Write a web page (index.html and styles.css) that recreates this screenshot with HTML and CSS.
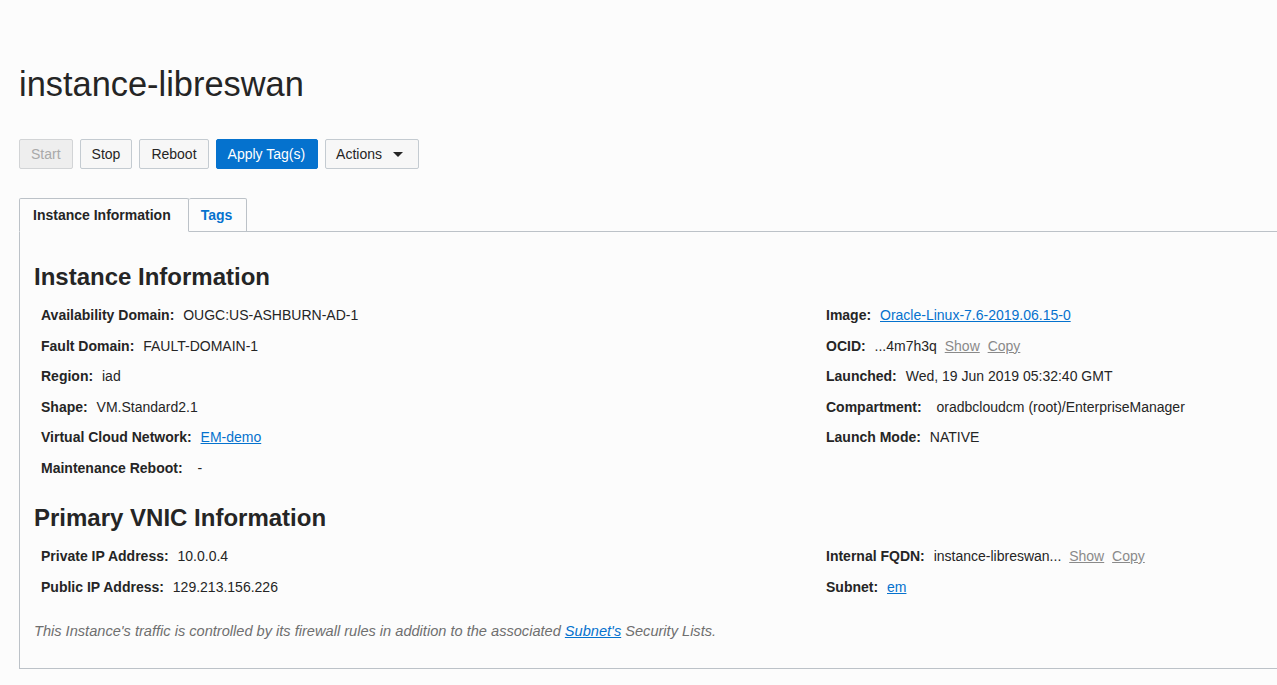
FILE: index.html
```html
<!DOCTYPE html>
<html lang="en">
<head>
  <meta charset="UTF-8">
  <meta name="viewport" content="width=device-width, initial-scale=1.0">
  <title>instance-libreswan</title>
  <link rel="stylesheet" href="styles.css">
</head>
<body>
  <div class="page">
    <h1>instance-libreswan</h1>

    <div class="toolbar">
      <button class="btn" disabled>Start</button>
      <button class="btn">Stop</button>
      <button class="btn">Reboot</button>
      <button class="btn btn-primary">Apply Tag(s)</button>
      <button class="btn btn-menu">Actions <span class="caret"></span></button>
    </div>

    <div class="tabs">
      <div class="tab active">Instance Information</div>
      <div class="tab">Tags</div>
    </div>

    <div class="panel">
      <h2>Instance Information</h2>
      <div class="details">
        <div class="col">
          <div class="row"><span class="label">Availability Domain:</span> <span>OUGC:US-ASHBURN-AD-1</span></div>
          <div class="row"><span class="label">Fault Domain:</span> <span>FAULT-DOMAIN-1</span></div>
          <div class="row"><span class="label">Region:</span> <span>iad</span></div>
          <div class="row"><span class="label">Shape:</span> <span>VM.Standard2.1</span></div>
          <div class="row"><span class="label">Virtual Cloud Network:</span> <a href="#">EM-demo</a></div>
          <div class="row"><span class="label">Maintenance Reboot:</span> <span class="wide">-</span></div>
        </div>
        <div class="col">
          <div class="row"><span class="label">Image:</span> <a href="#">Oracle-Linux-7.6-2019.06.15-0</a></div>
          <div class="row"><span class="label">OCID:</span> <span>...4m7h3q</span> <a class="muted" href="#">Show</a> <a class="muted" href="#">Copy</a></div>
          <div class="row"><span class="label">Launched:</span> <span>Wed, 19 Jun 2019 05:32:40 GMT</span></div>
          <div class="row"><span class="label">Compartment:</span> <span class="wide">oradbcloudcm (root)/EnterpriseManager</span></div>
          <div class="row"><span class="label">Launch Mode:</span> <span>NATIVE</span></div>
        </div>
      </div>

      <h2>Primary VNIC Information</h2>
      <div class="details">
        <div class="col">
          <div class="row"><span class="label">Private IP Address:</span> <span>10.0.0.4</span></div>
          <div class="row"><span class="label">Public IP Address:</span> <span>129.213.156.226</span></div>
        </div>
        <div class="col">
          <div class="row"><span class="label">Internal FQDN:</span> <span>instance-libreswan...</span> <a class="muted" href="#">Show</a> <a class="muted" href="#">Copy</a></div>
          <div class="row"><span class="label">Subnet:</span> <a href="#">em</a></div>
        </div>
      </div>

      <p class="note">This Instance's traffic is controlled by its firewall rules in addition to the associated <a href="#">Subnet's</a> Security Lists.</p>
    </div>
  </div>
</body>
</html>
```

FILE: styles.css
```css
:root {
  --background-color: #fcfcfc;
  --text-color: #252525;
  --link-color: #0572ce;
  --border-color: #bcc2c8;
}

html, body {
  margin: 0;
  overflow: hidden;
}

body {
  background-color: var(--background-color);
  color: var(--text-color);
  font-family: "Liberation Sans", Arial, sans-serif;
  font-size: 14px;
}

.page {
  padding: 58px 0 0 19px;
}

h1 {
  font-size: 34.4px;
  font-weight: normal;
  margin: 0 0 29px;
  line-height: 52px;
}

.toolbar {
  display: flex;
  gap: 7px;
  margin-bottom: 29px;
}

.btn {
  height: 30px;
  padding: 0 11px;
  border: 1px solid #c4cbd1;
  border-radius: 2px;
  background-color: #f7f7f7;
  color: #252525;
  font-family: inherit;
  font-size: 14px;
  cursor: pointer;
}

.btn:disabled {
  background-color: #eeeeee;
  color: #a9a9a9;
  border-color: #d2d4d6;
}

.btn-primary {
  background-color: #0572ce;
  border-color: #0572ce;
  color: #fff;
  padding: 0 12px 0 11px;
}

.btn-menu {
  display: flex;
  align-items: center;
  gap: 11px;
  padding: 0 15px 0 10px;
}

.caret {
  width: 0;
  height: 0;
  border-left: 5px solid transparent;
  border-right: 5px solid transparent;
  border-top: 5px solid #252525;
}

.tabs {
  display: flex;
  height: 34px;
  position: relative;
  z-index: 1;
  margin-bottom: -1px;
}

.tab {
  padding: 0 17px 0 13px;
  line-height: 32px;
  border: 1px solid var(--border-color);
  border-radius: 2px 2px 0 0;
  font-weight: bold;
  color: var(--link-color);
  background-color: var(--background-color);
}

.tab.active {
  color: var(--text-color);
  border-bottom-color: var(--background-color);
}

.tab + .tab {
  border-left: none;
  padding: 0 14px 0 12px;
}

.panel {
  box-sizing: border-box;
  border: 1px solid var(--border-color);
  border-right: none;
  padding: 24px 0 0 14px;
  height: 438px;
}

h2 {
  font-size: 24px;
  margin: 0 0 2px;
  line-height: 42px;
}

.details {
  display: grid;
  grid-template-columns: 785px 1fr;
  padding-left: 7px;
  margin-bottom: 14px;
}

.row {
  line-height: 16px;
  padding: 7px 0 7.5px;
  white-space: nowrap;
}

.label {
  font-weight: bold;
  margin-right: 5px;
}

.wide {
  margin-left: 6px;
}

a {
  color: var(--link-color);
}

a.muted {
  color: #8a8a8a;
  margin-left: 4px;
}

.note {
  font-style: italic;
  font-size: 14.6px;
  color: #6f6f6f;
  margin: 21px 0 0;
}
```
